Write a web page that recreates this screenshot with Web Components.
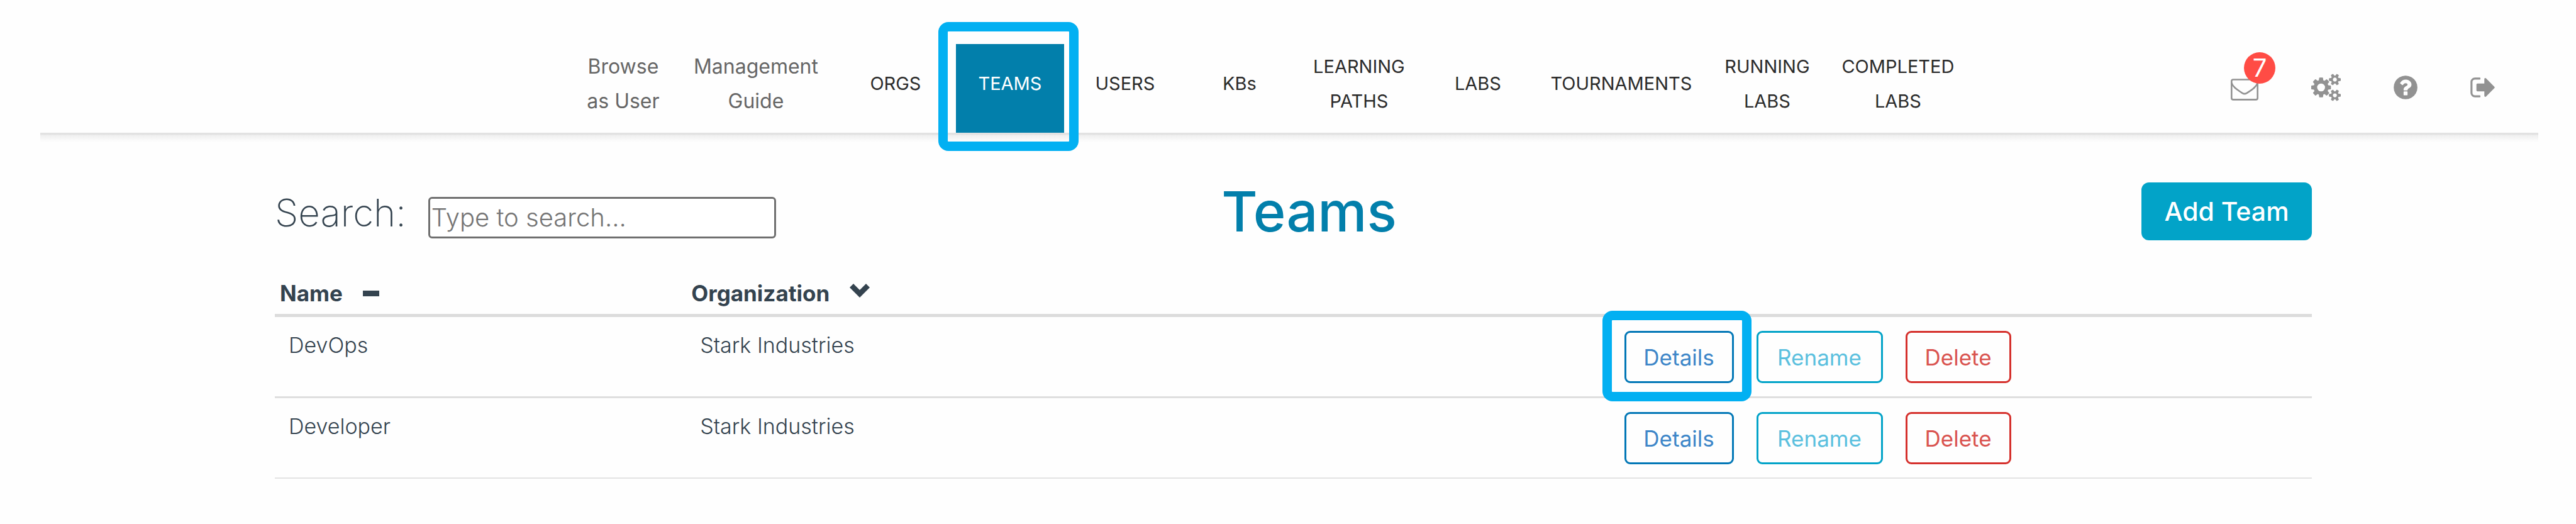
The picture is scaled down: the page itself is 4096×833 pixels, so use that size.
<!DOCTYPE html>
<html lang="en">
<head>
<meta charset="utf-8">
<title>Teams</title>
<style>
body {
  margin: 0;
  background: #fefefe;
  color: #34434f;
  font-family: Inter, "Open Sans", sans-serif;
}
main {
  padding: 64px 420px 0 437px;
}
</style>
</head>
<body>
<site-header>
  <nav-item muted>Browse<br>as User</nav-item>
  <nav-item muted>Management<br>Guide</nav-item>
  <nav-item>ORGS</nav-item>
  <nav-item active>TEAMS</nav-item>
  <nav-item>USERS</nav-item>
  <nav-item>KBs</nav-item>
  <nav-item>LEARNING<br>PATHS</nav-item>
  <nav-item>LABS</nav-item>
  <nav-item>TOURNAMENTS</nav-item>
  <nav-item>RUNNING<br>LABS</nav-item>
  <nav-item>COMPLETED<br>LABS</nav-item>
  <icon-link slot="icons" icon="mail" label="Messages" count="7"></icon-link>
  <icon-link slot="icons" icon="cogs" label="Settings"></icon-link>
  <icon-link slot="icons" icon="help" label="Help"></icon-link>
  <icon-link slot="icons" icon="exit" label="Sign out"></icon-link>
</site-header>
<main>
  <page-toolbar>
    <search-box slot="search"></search-box>
    <span slot="title">Teams</span>
    <app-button slot="action" kind="solid">Add Team</app-button>
  </page-toolbar>
  <team-table></team-table>
</main>

<script>
// frame drawn around whatever is passed in
class HighlightFrame extends HTMLElement {
  constructor() {
    super();
    this.attachShadow({mode: 'open'}).innerHTML = `<style>
      :host { display: block; position: relative; }
      .ring {
        position: absolute;
        inset: var(--ring-inset, -32px -28px -29px -35px);
        border: 15px solid #02b0f2;
        border-radius: 16px;
        pointer-events: none;
        z-index: 2;
      }
    </style><slot></slot><div class="ring"></div>`;
  }
}
customElements.define('highlight-frame', HighlightFrame);

class NavItem extends HTMLElement {
  constructor() {
    super();
    const active = this.hasAttribute('active');
    const link = `<a href="#"${active ? ' aria-current="page"' : ''}><span><slot></slot></span></a>`;
    this.attachShadow({mode: 'open'}).innerHTML = `<style>
      :host { display: block; color: #2b2b2b; }
      :host([muted]) { color: #666; }
      :host([active]) { color: #fff; }
      highlight-frame { --ring-inset: -35px -23px -29px -28px; }
      a {
        display: flex;
        align-items: center;
        justify-content: center;
        box-sizing: border-box;
        height: 141px;
        padding-bottom: 16px;
        color: inherit;
        font-size: 29px;
        line-height: 55px;
        text-align: center;
        text-decoration: none;
        white-space: nowrap;
      }
      :host([muted]) a { font-size: 32px; }
      :host([active]) a { background: #027fab; }
    </style>${active ? `<highlight-frame>${link}</highlight-frame>` : link}`;
  }
}
customElements.define('nav-item', NavItem);

const icons = {
  mail: {
    width: 44,
    box: '0 0 1792 1792',
    body: '<g fill="none" stroke="currentColor" stroke-width="105"><rect x="53" y="385" width="1686" height="1300" rx="110"/><path d="M56 600C120 830 330 990 760 1270Q896 1350 1032 1270C1462 990 1672 830 1736 600"/></g>'
  },
  cogs: {
    width: 47,
    box: '-64 0 1920 1792',
    body: '<path d="M832 896q0-106-75-181t-181-75-181 75-75 181 75 181 181 75 181-75 75-181zm768 512q0-52-38-90t-90-38-90 38-38 90q0 53 37.5 90.5t90.5 37.5 90.5-37.5 37.5-90.5zm0-1024q0-52-38-90t-90-38-90 38-38 90q0 53 37.5 90.5t90.5 37.5 90.5-37.5 37.5-90.5zm-384 421v185q0 10-7 19.5t-16 10.5l-155 24q-11 35-32 76 34 48 90 115 7 11 7 20 0 12-7 19-23 30-82.5 89.5t-78.5 59.5q-11 0-21-7l-115-90q-37 19-77 31-11 108-23 155-7 24-30 24h-186q-11 0-20-7.5t-10-17.5l-23-153q-34-10-75-31l-118 89q-7 7-20 7-11 0-21-8-144-133-144-160 0-9 7-19 10-14 41-53t47-61q-23-44-35-82l-152-24q-10-1-17-9.5t-7-19.5v-185q0-10 7-19.5t16-10.5l155-24q11-35 32-76-34-48-90-115-7-11-7-20 0-12 7-20 22-30 82-89t79-59q11 0 21 7l115 90q34-18 77-32 11-108 23-154 7-24 30-24h186q11 0 20 7.5t10 17.5l23 153q34 10 75 31l118-89q8-7 20-7 11 0 21 8 144 133 144 160 0 8-7 19-12 16-42 54t-45 60q23 48 34 82l152 23q10 2 17 10.5t7 19.5zm640 533v140q0 16-149 31-12 27-30 52 51 113 51 138 0 4-4 7-122 71-124 71-8 0-46-47t-52-68q-20 2-30 2t-30-2q-14 21-52 68t-46 47q-2 0-124-71-4-3-4-7 0-25 51-138-18-25-30-52-149-15-149-31v-140q0-16 149-31 13-29 30-52-51-113-51-138 0-4 4-7 4-2 35-20t59-34 30-16q8 0 46 46.5t52 67.5q20-2 30-2t30 2q51-71 92-112l6-2q4 0 124 70 4 3 4 7 0 25-51 138 17 23 30 52 149 15 149 31zm0-1024v140q0 16-149 31-12 27-30 52 51 113 51 138 0 4-4 7-122 71-124 71-8 0-46-47t-52-68q-20 2-30 2t-30-2q-14 21-52 68t-46 47q-2 0-124-71-4-3-4-7 0-25 51-138-18-25-30-52-149-15-149-31v-140q0-16 149-31 13-29 30-52-51-113-51-138 0-4 4-7 4-2 35-20t59-34 30-16q8 0 46 46.5t52 67.5q20-2 30-2t30 2q51-71 92-112l6-2q4 0 124 70 4 3 4 7 0 25-51 138 17 23 30 52 149 15 149 31z"/>'
  },
  help: {
    width: 38,
    box: '128 0 1536 1792',
    body: '<path d="M1024 1376v-192q0-14-9-23t-23-9h-192q-14 0-23 9t-9 23v192q0 14 9 23t23 9h192q14 0 23-9t9-23zm256-672q0-88-55.5-163t-138.5-116-170-41q-243 0-371 213-15 24 8 42l132 100q7 6 19 6 16 0 25-12 53-68 86-92 34-24 86-24 48 0 85.5 26t37.5 59q0 38-20 61t-68 45q-63 28-115.5 86.5t-52.5 125.5v36q0 14 9 23t23 9h192q14 0 23-9t9-23q0-19 21.5-49.5t54.5-49.5q32-18 49-28.5t46-35 44.5-48 28-60.5 12.5-81zm384 192q0 209-103 385.5t-279.5 279.5-385.5 103-385.5-103-279.5-279.5-103-385.5 103-385.5 279.5-279.5 385.5-103 385.5 103 279.5 279.5 103 385.5z"/>'
  },
  exit: {
    width: 39,
    box: '64 0 1568 1792',
    body: '<path d="M704 1440q0 4 1 20t.5 26.5-3 23.5-10 19.5-20.5 6.5h-320q-119 0-203.5-84.5t-84.5-203.5v-704q0-119 84.5-203.5t203.5-84.5h320q13 0 22.5 9.5t9.5 22.5q0 4 1 20t.5 26.5-3 23.5-10 19.5-20.5 6.5h-320q-66 0-113 47t-47 113v704q0 66 47 113t113 47h312l11.5 1 11.5 3 8 5.5 7 9 2 13.5zm928-544q0 26-19 45l-544 544q-19 19-45 19t-45-19-19-45v-288h-448q-26 0-45-19t-19-45v-384q0-26 19-45t45-19h448v-288q0-26 19-45t45-19 45 19l544 544q19 19 19 45z"/>'
  }
};

class IconLink extends HTMLElement {
  constructor() {
    super();
    const icon = icons[this.getAttribute('icon')];
    const count = this.getAttribute('count');
    this.attachShadow({mode: 'open'}).innerHTML = `<style>
      :host { display: block; }
      a { display: block; position: relative; color: #929292; text-decoration: none; }
      svg { display: block; fill: currentColor; }
      .count {
        position: absolute;
        left: 21px;
        top: -34px;
        width: 50px;
        height: 50px;
        border-radius: 50%;
        background: #ff4c45;
        color: #fff;
        font-size: 40px;
        line-height: 50px;
        text-align: center;
      }
    </style>
    <a href="#" aria-label="${this.getAttribute('label')}">
      <svg width="${icon.width}" height="44" viewBox="${icon.box}">${icon.body}</svg>
      ${count ? `<span class="count">${count}</span>` : ''}
    </a>`;
  }
}
customElements.define('icon-link', IconLink);

class SiteHeader extends HTMLElement {
  constructor() {
    super();
    this.attachShadow({mode: 'open'}).innerHTML = `<style>
      :host { display: block; margin: 0 60px 0 64px; }
      header {
        display: grid;
        grid-template-columns: 15fr auto 16fr;
        padding-top: 70px;
      }
      nav {
        grid-column: 2;
        display: grid;
        grid-template-columns: 170px 252px 192px 172px 194px 170px 210px 168px 288px 176px 240px;
      }
      .icons {
        display: flex;
        align-items: center;
        justify-content: flex-end;
        gap: 84px;
        padding: 0 69px 4px 0;
      }
      .shadow {
        height: 15px;
        background: linear-gradient(#e2e2e2 0, #e2e2e2 3px, #efefef 4px, #fafafa 12px, #fefefe 15px);
      }
    </style>
    <header>
      <nav><slot></slot></nav>
      <div class="icons"><slot name="icons"></slot></div>
    </header>
    <div class="shadow"></div>`;
  }
}
customElements.define('site-header', SiteHeader);

class AppButton extends HTMLElement {
  constructor() {
    super();
    this.attachShadow({mode: 'open'}).innerHTML = `<style>
      :host { display: block; }
      button {
        display: block;
        box-sizing: border-box;
        width: 100%;
        height: 83px;
        margin: 0;
        padding: 0;
        border: 3px solid var(--line);
        border-radius: 9px;
        background: transparent;
        color: var(--ink);
        font: 400 35px/40px Inter, "Open Sans", sans-serif;
        white-space: nowrap;
        cursor: pointer;
      }
      :host([kind="details"]) { --line: #0277b6; --ink: #3d86c8; width: 174px; }
      :host([kind="rename"]) { --line: #02a3c8; --ink: #5bc0de; width: 201px; }
      :host([kind="delete"]) { --line: #d5302c; --ink: #d9534f; width: 168px; }
      :host([kind="solid"]) { --line: #02a3c8; --ink: #fff; width: 271px; }
      :host([kind="solid"]) button {
        height: 92px;
        border-radius: 12px;
        background: #02a3c8;
        font-size: 41px;
        font-weight: 500;
      }
    </style><button type="button"><slot></slot></button>`;
  }
}
customElements.define('app-button', AppButton);

class SearchBox extends HTMLElement {
  constructor() {
    super();
    this.attachShadow({mode: 'open'}).innerHTML = `<style>
      :host { display: flex; align-items: baseline; gap: 35px; padding-top: 12px; }
      label { font-size: 60px; font-weight: 200; line-height: 66px; }
      input {
        box-sizing: border-box;
        width: 553px;
        height: 66px;
        margin: 0;
        padding: 0 2px;
        border: 3px solid #6f6f6f;
        border-radius: 6px;
        background: #fff;
        color: inherit;
        font: 300 40px/60px Inter, "Open Sans", sans-serif;
      }
      input::placeholder { color: #757575; opacity: 1; }
    </style>
    <label for="q">Search:</label>
    <input id="q" type="text" placeholder="Type to search...">`;
  }
}
customElements.define('search-box', SearchBox);

class PageToolbar extends HTMLElement {
  constructor() {
    super();
    this.attachShadow({mode: 'open'}).innerHTML = `<style>
      :host {
        display: grid;
        grid-template-columns: 30fr auto 29fr;
        align-items: center;
        height: 92px;
      }
      h1 { margin: 0; color: #027fab; font-size: 88px; font-weight: 500; line-height: 92px; }
      .action { display: flex; justify-content: flex-end; }
    </style>
    <slot name="search"></slot>
    <h1><slot name="title"></slot></h1>
    <div class="action"><slot name="action"></slot></div>`;
  }
}
customElements.define('page-toolbar', PageToolbar);

const teams = [
  {name: 'DevOps', org: 'Stark Industries', highlight: true},
  {name: 'Developer', org: 'Stark Industries'}
];

class TeamTable extends HTMLElement {
  constructor() {
    super();
    this.attachShadow({mode: 'open'}).innerHTML = `<style>
      :host { display: block; margin-top: 64px; }
      table { width: 100%; table-layout: fixed; border-collapse: separate; border-spacing: 0; }
      .name { width: 20.2%; }
      .org { width: 45.3%; }
      th { padding: 0 0 13px 8px; border-bottom: 5px solid #dcdcdc; text-align: left; }
      th button {
        display: flex;
        align-items: center;
        gap: 32px;
        margin: 0;
        padding: 0;
        border: 0;
        background: none;
        color: inherit;
        font: 700 35px/40px Inter, "Open Sans", sans-serif;
        cursor: pointer;
      }
      svg { display: block; fill: currentColor; }
      td {
        padding: 25px 0 21px 22px;
        border-bottom: 3px solid #dfdfdf;
        font-size: 34px;
        font-weight: 300;
        line-height: 40px;
        vertical-align: top;
      }
      td.actions { padding: 22px 0 21px 24px; }
      tr:last-child td { border-bottom: 2px solid #e3e3e3; }
      .buttons { display: flex; gap: 36px; }
    </style>
    <table>
      <colgroup><col class="name"><col class="org"><col></colgroup>
      <thead>
        <tr>
          <th scope="col"><button type="button">Name<svg width="26" height="24" viewBox="0 0 26 24"><path d="M0 8h26v9H0z"/></svg></button></th>
          <th scope="col"><button type="button">Organization<svg width="32" height="30" viewBox="0 0 32 30"><path d="M0 6L6 0 16 10 26 0 32 6 16 22z"/></svg></button></th>
          <th aria-label="Actions"></th>
        </tr>
      </thead>
      <tbody>${teams.map(team => this.row(team)).join('')}</tbody>
    </table>`;
  }
  row(team) {
    const details = '<app-button kind="details">Details</app-button>';
    return `<tr>
      <td>${team.name}</td>
      <td>${team.org}</td>
      <td class="actions"><div class="buttons">
        ${team.highlight ? `<highlight-frame>${details}</highlight-frame>` : details}
        <app-button kind="rename">Rename</app-button>
        <app-button kind="delete">Delete</app-button>
      </div></td>
    </tr>`;
  }
}
customElements.define('team-table', TeamTable);
</script>
</body>
</html>
